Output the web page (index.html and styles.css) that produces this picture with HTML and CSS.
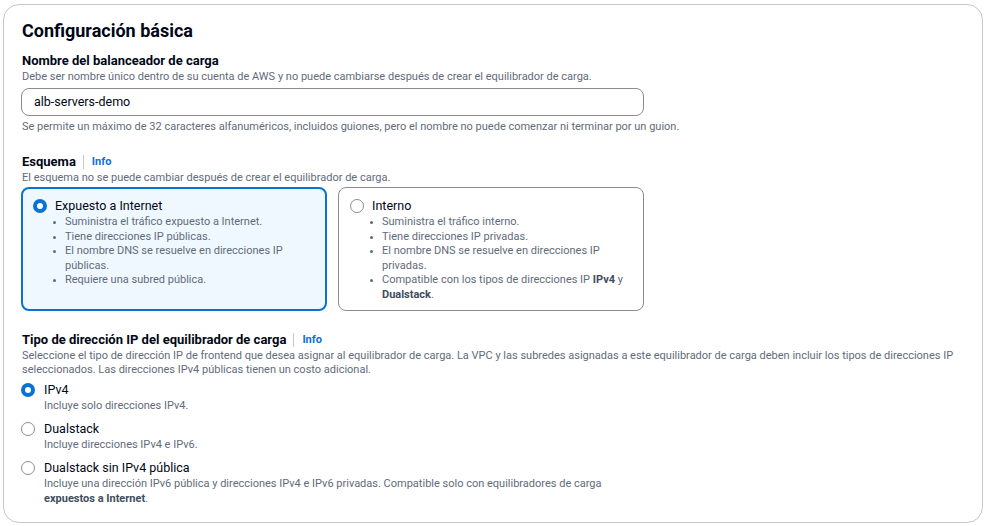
FILE: index.html
```html
<!DOCTYPE html>
<html lang="es">
<head>
<meta charset="utf-8">
<link rel="stylesheet" href="styles.css">
</head>
<body>
<div class="container">
  <h2 class="title">Configuración básica</h2>

  <div class="field first">
    <div class="label">Nombre del balanceador de carga</div>
    <div class="desc">Debe ser nombre único dentro de su cuenta de AWS y no puede cambiarse después de crear el equilibrador de carga.</div>
    <div class="input">alb-servers-demo</div>
    <div class="constraint">Se permite un máximo de 32 caracteres alfanuméricos, incluidos guiones, pero el nombre no puede comenzar ni terminar por un guion.</div>
  </div>

  <div class="field second">
    <div class="label">Esquema <span class="sep"></span><span class="info">Info</span></div>
    <div class="desc">El esquema no se puede cambiar después de crear el equilibrador de carga.</div>
    <div class="tiles">
      <div class="tile selected">
        <div class="tile-head"><span class="radio checked"></span><span class="tile-title">Expuesto a Internet</span></div>
        <ul class="bullets">
          <li>Suministra el tráfico expuesto a Internet.</li>
          <li>Tiene direcciones IP públicas.</li>
          <li>El nombre DNS se resuelve en direcciones IP públicas.</li>
          <li>Requiere una subred pública.</li>
        </ul>
      </div>
      <div class="tile">
        <div class="tile-head"><span class="radio"></span><span class="tile-title">Interno</span></div>
        <ul class="bullets">
          <li>Suministra el tráfico interno.</li>
          <li>Tiene direcciones IP privadas.</li>
          <li>El nombre DNS se resuelve en direcciones IP privadas.</li>
          <li>Compatible con los tipos de direcciones IP <b>IPv4</b> y <b>Dualstack</b>.</li>
        </ul>
      </div>
    </div>
  </div>

  <div class="field">
    <div class="label">Tipo de dirección IP del equilibrador de carga <span class="sep"></span><span class="info">Info</span></div>
    <div class="desc">Seleccione el tipo de dirección IP de frontend que desea asignar al equilibrador de carga. La VPC y las subredes asignadas a este equilibrador de carga deben incluir los tipos de direcciones IP seleccionados. Las direcciones IPv4 públicas tienen un costo adicional.</div>
    <div class="options">
      <div class="option">
        <span class="radio checked"></span>
        <div class="opt-body">
          <div class="opt-title">IPv4</div>
          <div class="opt-desc">Incluye solo direcciones IPv4.</div>
        </div>
      </div>
      <div class="option">
        <span class="radio"></span>
        <div class="opt-body">
          <div class="opt-title">Dualstack</div>
          <div class="opt-desc">Incluye direcciones IPv4 e IPv6.</div>
        </div>
      </div>
      <div class="option">
        <span class="radio"></span>
        <div class="opt-body">
          <div class="opt-title">Dualstack sin IPv4 pública</div>
          <div class="opt-desc narrow">Incluye una dirección IPv6 pública y direcciones IPv4 e IPv6 privadas. Compatible solo con equilibradores de carga <b>expuestos a Internet</b>.</div>
        </div>
      </div>
    </div>
  </div>
</div>
</body>
</html>
```

FILE: styles.css
```css
* { box-sizing: border-box; }
html, body { margin: 0; padding: 0; background: #ffffff; }
body {
  font-family: Roboto, "Liberation Sans", sans-serif;
  color: #000716;
  padding: 4px 3px 3px 3px;
}
.container {
  border: 1px solid #c6c6cd;
  border-radius: 16px;
  padding: 14px 20px 20px 18px;
  height: 519px;
}
.title {
  margin: 0 0 9px 0;
  font-size: 18px;
  font-weight: 700;
  line-height: 24px;
}
.field { margin-bottom: 18px; }
.field.first { margin-bottom: 19px; }
.field.second { margin-bottom: 20px; }
.label {
  font-size: 13px;
  font-weight: 700;
  line-height: 18px;
  display: flex;
  align-items: center;
}
.sep {
  display: inline-block;
  width: 1px;
  height: 14px;
  background: #c6c6cd;
  margin: 0 8px 0 7px;
}
.info {
  color: #0972d3;
  font-size: 11px;
  font-weight: 700;
}
.desc {
  font-size: 11px;
  line-height: 14px;
  color: #5f6b7a;
}
.input {
  margin-top: 4px;
  margin-left: -1px;
  width: 623px;
  height: 28px;
  border: 1px solid #8c8c94;
  border-radius: 8px;
  padding: 0 11px 0 12px;
  font-size: 12.5px;
  line-height: 26px;
}
.constraint {
  margin-top: 4px;
  font-size: 11px;
  line-height: 14px;
  color: #5f6b7a;
}
.tiles {
  display: flex;
  gap: 11px;
  margin-top: 2px;
  margin-left: -1px;
}
.tile {
  width: 306px;
  height: 124px;
  border: 1px solid #8c8c94;
  border-radius: 8px;
  padding: 9px 11px;
}
.tile.selected {
  border: 2px solid #0972d3;
  background: #f0f8ff;
  padding: 8px 10px;
}
.tile-head { display: flex; align-items: center; gap: 8px; }
.tile-title { font-size: 12.5px; line-height: 18px; }
.radio {
  flex: none;
  width: 14px;
  height: 14px;
  border-radius: 50%;
  border: 1px solid #8c8c94;
  background: #fff;
}
.radio.checked { border: 4px solid #0972d3; }
.bullets {
  margin: 0;
  padding: 0 0 0 32px;
  font-size: 11px;
  line-height: 14.6px;
  color: #5f6b7a;
}
.bullets li { list-style: disc; }
.bullets li::marker { font-size: 9px; }
.bullets b { color: #414d5c; }
.options { margin-top: 4px; display: flex; flex-direction: column; gap: 6.5px; }
.option { display: flex; gap: 8px; align-items: flex-start; margin-left: -1px; }
.option .radio { margin-top: 2px; }
.opt-body { margin-left: 1px; }
.opt-title { font-size: 12.5px; line-height: 18px; }
.opt-desc { font-size: 11px; line-height: 14.6px; color: #5f6b7a; }
.opt-desc.narrow { max-width: 565px; }
.opt-desc b { color: #414d5c; }
```
